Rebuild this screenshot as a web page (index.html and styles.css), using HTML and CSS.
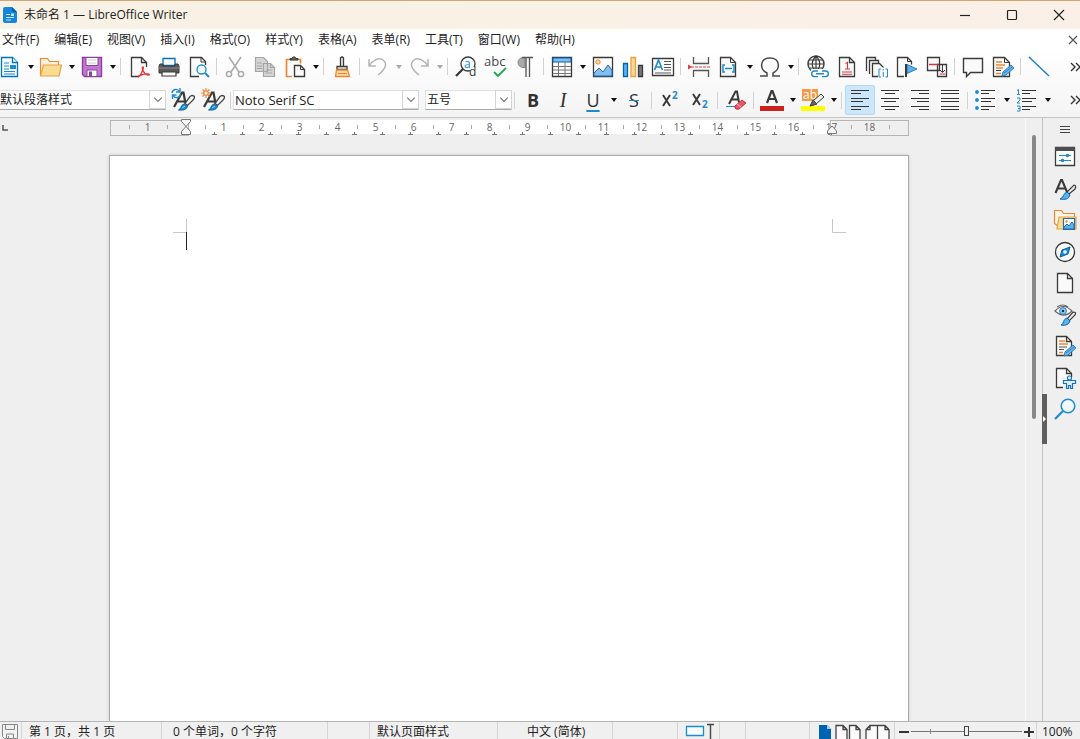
FILE: index.html
```html
<!DOCTYPE html>
<html lang="zh-CN">
<head>
<meta charset="utf-8">
<title>未命名 1 — LibreOffice Writer</title>
<link rel="stylesheet" href="styles.css">
</head>
<body>
<svg class="defs" aria-hidden="true">
  <symbol id="page" viewBox="0 0 24 24"><path d="M4.500 2.500h10l5 5v14h-15z" fill="#fafafa" stroke="#3a3a38" stroke-width="1.300"/><path d="M14.500 2.500v5h5" fill="none" stroke="#3a3a38" stroke-width="1.300"/></symbol>
  <symbol id="chev" viewBox="0 0 16 18"><path d="M4.500 7l4 4 4-4" fill="none" stroke="#777" stroke-width="1.200"/></symbol>
  <symbol id="brushA" viewBox="0 0 24 24"><path d="M3 19L11 4.500h1.500l2 11M6.500 13.500h7" fill="none" stroke="#3a3a38" stroke-width="2.200"/><path d="M21 7.500c3 0 3 2 1.500 4l-6 6-2.500-2 5-7z" fill="#fafafa" stroke="#444" stroke-width="1.300"/><path d="M13 16l3.500 2.500c-1 3-4 4-9 3.500 3-1 2-5 5.500-6z" fill="#1e8bcd" stroke="#0063b1"/><path d="M11 20l3-2" stroke="#9dd2f5"/></symbol>
  <symbol id="pen" viewBox="0 0 24 24"><path d="M12 22l1-4 8-7 3 3-8 7z" fill="#6bb5eb" stroke="#2a7fc4"/><path d="M14 19l8-6" stroke="#2a7fc4"/></symbol>
</svg>

<header class="titlebar">
  <svg class="app" viewBox="0 0 16 18"><path d="M3 1h7l5 5v9q0 2-2 2H3q-2 0-2-2V3q0-2 2-2z" fill="#1685d8"/><path d="M10 1v3q0 2 2 2h3z" fill="#0a5ea8"/><path d="M4 8.500h4M4 11.500h8M4 14h5" stroke="#bfe4ff" stroke-width="1.200"/><rect x="9" y="7.500" width="3" height="2.500" fill="#bfe4ff"/></svg>
  <h1 class="title">未命名 1 — LibreOffice Writer</h1>
  <button class="win" aria-label="最小化"><svg viewBox="0 0 12 12"><path d="M1 6.500h10"/></svg></button>
  <button class="win" aria-label="最大化"><svg viewBox="0 0 12 12"><rect x="1.500" y="1.500" width="9" height="9" rx="1"/></svg></button>
  <button class="win" aria-label="关闭"><svg viewBox="0 0 12 12"><path d="M1 1l10 10M11 1L1 11"/></svg></button>
</header>

<nav class="menubar">
  <button>文件(F)</button><button>编辑(E)</button><button>视图(V)</button><button>插入(I)</button><button>格式(O)</button><button>样式(Y)</button><button>表格(A)</button><button>表单(R)</button><button>工具(T)</button><button>窗口(W)</button><button>帮助(H)</button>
  <button class="docclose" aria-label="关闭文档"><svg viewBox="0 0 10 10"><path d="M1 1l8 8M9 1L1 9"/></svg></button>
</nav>

<div class="tools">
<div class="toolbar" role="toolbar" aria-label="标准">
  <button class="tb" aria-label="新建"><svg viewBox="0 0 24 24"><path d="M3.500 2.500h11l5 5v14h-16z" fill="#f4fbff" stroke="#0075be" stroke-width="1.300"/><path d="M14.500 2.500v5h5" fill="#fff" stroke="#0075be" stroke-width="1.300"/><path d="M6 8h5M6 11h5M6 14h5M6 16.500h11M6 19h11" stroke="#1e8bcd"/><rect x="12" y="10" width="6" height="4" fill="#1e8bcd"/></svg></button><button class="dd" aria-label="新建选项"></button>
  <button class="tb" aria-label="打开"><svg viewBox="0 0 24 24"><path d="M1.500 20.500v-17h7l2 3h9v4" fill="#fdf1de" stroke="#ed8733" stroke-width="1.200"/><path d="M1.500 21l3-11h18l-2.500 11z" fill="#f9dc8f" stroke="#e5a347" stroke-width="1.200"/></svg></button><button class="dd" aria-label="打开选项"></button>
  <button class="tb" aria-label="保存"><svg viewBox="0 0 24 24"><path d="M2.500 2.500h19v19h-17l-2-2z" fill="#c079cf" stroke="#8c3fa0" stroke-width="1.400"/><path d="M6 2.500h12v8H6z" fill="#fff" stroke="#8c3fa0"/><path d="M8 5h8M8 8h8" stroke="#ccc"/><path d="M7 15h10v6.500H7z" fill="#fff" stroke="#8c3fa0"/><path d="M9 16.500h3v5H9z" fill="#8c3fa0"/></svg></button><button class="dd" aria-label="保存选项"></button>
  <span class="sep"></span>
  <button class="tb" aria-label="导出为 PDF"><svg viewBox="0 0 24 24"><path d="M12 21.500H4.500v-19h10l5 5V12" fill="#fafafa" stroke="#3a3a38" stroke-width="1.300"/><path d="M14.500 2.500v5h5" fill="none" stroke="#3a3a38" stroke-width="1.300"/><path d="M16 12c-2 0 1 8 5 8s-1-3-9 1c-2 1 0 2 2-2s3-7 2-7z" fill="none" stroke="#e33b3b" stroke-width="1.400"/></svg></button>
  <button class="tb" aria-label="打印"><svg viewBox="0 0 24 24"><path d="M6 3.500h12v7H6z" fill="#fff" stroke="#0075be" stroke-width="1.300"/><path d="M3 9h3v2h12V9h3l1 2v7H2v-7z" fill="#5b5b5b" stroke="#3a3a38"/><path d="M5 17h14v4H5z" fill="#fff" stroke="#3a3a38" stroke-width="1.200"/><path d="M2 13h20" stroke="#888"/></svg></button>
  <button class="tb" aria-label="打印预览"><svg viewBox="0 0 24 24"><path d="M12 21.500H3.500v-19h11l4 4V10" fill="#fafafa" stroke="#3a3a38" stroke-width="1.300"/><path d="M14 2.500v4.500h4.500" fill="none" stroke="#3a3a38"/><circle cx="14.500" cy="14.500" r="4.500" fill="#f3fbff" stroke="#1e8bcd" stroke-width="1.300"/><path d="M18 18l4 4" stroke="#1e8bcd" stroke-width="2"/></svg></button>
  <span class="sep"></span>
  <button class="tb" aria-label="剪切"><svg viewBox="0 0 24 24" fill="none" stroke="#aaa" stroke-width="1.500"><path d="M6 2l10 15M18 2L8 17"/><circle cx="6" cy="19" r="2.600"/><circle cx="18" cy="19" r="2.600"/></svg></button>
  <button class="tb" aria-label="复制"><svg viewBox="0 0 24 24" fill="#d5d5d5" stroke="#a5a5a5" stroke-width="1.200"><path d="M2.500 2.500h8l4 4v10h-12zM10.500 8.500h7l4 4v9h-11z"/><path d="M17.500 8.500v4h4M4 8h5M4 11h5M4 13.500h5M13 15h6M13 18h6" fill="none"/></svg></button>
  <button class="tb" aria-label="粘贴"><svg viewBox="0 0 24 24"><path d="M9 21.500H3.500V4.500h14v4" fill="#fff" stroke="#ed8733" stroke-width="1.700"/><path d="M7 5V3.500h2l1-1.500h2l1 1.500h2V5z" fill="#666" stroke="#3a3a38"/><path d="M11.500 10.500h6l4 4v7h-10z" fill="#fafafa" stroke="#3a3a38" stroke-width="1.400"/><path d="M17.500 10.500v4h4" fill="none" stroke="#3a3a38"/></svg></button><button class="dd" aria-label="粘贴选项"></button>
  <span class="sep"></span>
  <button class="tb" aria-label="克隆格式"><svg viewBox="0 0 24 24"><path d="M10.500 11V3q1.500-2 3 0v8M7 11.500h10v3H7z" fill="#eee" stroke="#3a3a38" stroke-width="1.300"/><path d="M6.500 15h11l2 6.500h-14z" fill="#fbd9a5" stroke="#ed8733" stroke-width="1.300"/><path d="M8 18.500h9" stroke="#ed8733"/></svg></button>
  <span class="sep"></span>
  <button class="tb" aria-label="撤消"><svg viewBox="0 0 24 24" fill="none" stroke="#b5b5b5" stroke-width="1.500"><path d="M3 4v7h7M3 11C7 5 13 2 17 5s4 8-5 15"/></svg></button><button class="dd dim" aria-label="撤消选项"></button>
  <button class="tb" aria-label="恢复"><svg viewBox="0 0 24 24" fill="none" stroke="#b5b5b5" stroke-width="1.500"><path d="M21 4v7h-7M21 11C17 5 11 2 7 5s-4 8 5 15"/></svg></button><button class="dd dim" aria-label="恢复选项"></button>
  <span class="sep"></span>
  <button class="tb" aria-label="查找与替换"><svg viewBox="0 0 24 24"><circle cx="14" cy="9" r="7" fill="#f7fcff" stroke="#3a3a38" stroke-width="1.300"/><path d="M9 14l-7 7" stroke="#3a3a38" stroke-width="2.300"/><text x="10" y="13" class="gl" font-size="12" fill="#1e8bcd">a</text><path d="M16 12h8v10h-8z" fill="#fafafa"/><text x="15" y="21" class="gl" font-size="12" fill="#3a3a38">d</text></svg></button>
  <button class="tb" aria-label="拼写检查"><svg viewBox="0 0 24 24"><text x="0" y="11" class="gl" font-size="13" fill="#4a4a48">abc</text><path d="M10 17l4 4 8-8" fill="none" stroke="#18ab50" stroke-width="1.800"/></svg></button>
  <button class="tb" aria-label="格式标记"><svg viewBox="0 0 24 24"><path d="M11 2.500H9a5 5 0 0 0 0 10h2z" fill="#aaa" stroke="#888"/><path d="M8 2.500h11M12 3v19M15.500 3v19" stroke="#555" stroke-width="1.300"/></svg></button>
  <span class="sep"></span>
  <button class="tb" aria-label="插入表格"><svg viewBox="0 0 24 24"><path d="M2.500 2.500h19v19h-19z" fill="#fff" stroke="#3a3a38" stroke-width="1.300"/><path d="M3 3h18v4H3z" fill="#83beec" stroke="#0063b1"/><path d="M3 11.500h18M3 15h18M3 18.500h18M8.500 7v14M15 7v14" stroke="#777"/></svg></button><button class="dd" aria-label="表格选项"></button>
  <button class="tb" aria-label="插入图像"><svg viewBox="0 0 24 24"><path d="M2.500 2.500h19v19h-19z" fill="#fff" stroke="#3a3a38" stroke-width="1.300"/><circle cx="7" cy="7" r="2.200" fill="#fbd9a5" stroke="#ed8733"/><path d="M3 21v-3l5-5 4 4 5-7 4 5v6z" fill="#83beec" stroke="#1e6fb8"/></svg></button>
  <button class="tb" aria-label="插入图表"><svg viewBox="0 0 24 24" stroke-width="1.300"><path d="M2.500 8.500h4v13h-4z" fill="#5cb3ec" stroke="#0063b1"/><path d="M10 2.500h4.500v19H10z" fill="#fbd98d" stroke="#e5a347"/><path d="M17.500 10.500h4v11h-4z" fill="#777" stroke="#3a3a38"/></svg></button>
  <button class="tb" aria-label="插入文本框"><svg viewBox="0 0 24 24"><path d="M1.500 3.500h21v17h-21z" fill="#fff" stroke="#3a3a38" stroke-width="1.300"/><path d="M3.500 15L7.500 5l4 10M5 12h5" fill="none" stroke="#1e8bcd" stroke-width="1.600"/><path d="M13 6.500h7M13 9.500h7M13 12.500h7M13 15h7M4 18h16" stroke="#555"/></svg></button>
  <span class="sep"></span>
  <button class="tb" aria-label="插入分页符"><svg viewBox="0 0 24 24"><path d="M6.500 2v6.500h15V2M6.500 22v-6.500h15V22" fill="#fafafa" stroke="#555" stroke-width="1.300"/><path d="M4 12h20" stroke="#e33b3b" stroke-width="1.200" stroke-dasharray="3 1"/><path d="M1 9.500l4 2.500-4 2.500z" fill="#e33b3b"/></svg></button>
  <button class="tb" aria-label="插入字段"><svg viewBox="0 0 24 24"><path d="M3.500 2.500h10l5 5v14h-15z" fill="#fafafa" stroke="#3a3a38" stroke-width="1.300"/><path d="M13.500 2.500v5h5" fill="none" stroke="#3a3a38"/><path d="M8 10H6v7h2M15 10h2v7h-2M8 13.500h7" fill="none" stroke="#1e8bcd" stroke-width="1.500"/></svg></button><button class="dd" aria-label="字段选项"></button>
  <button class="tb" aria-label="插入特殊字符"><svg viewBox="0 0 24 24" fill="none" stroke="#4a4a4a" stroke-width="1.500"><path d="M2 21h7v-3C1 14 2 3 12 3s11 11 3 15v3h7"/></svg></button><button class="dd" aria-label="特殊字符选项"></button>
  <span class="sep"></span>
  <button class="tb" aria-label="插入超链接"><svg viewBox="0 0 24 24" fill="none"><circle cx="11" cy="9" r="8" stroke="#3a3a38" stroke-width="1.400"/><path d="M3 9h16M4.500 5h13M4.500 13h13M11 1v16M11 1c-5 5-5 11 0 16M11 1c5 5 5 11 0 16" stroke="#3a3a38" stroke-width="1.200"/><path d="M6 14h19v9H6z" fill="#fafafa"/><path d="M13 16H9.500a2.800 2.800 0 0 0 0 5.600H13M17 16h3.500a2.800 2.800 0 0 1 0 5.600H17M11 18.800h8" stroke="#1e8bcd" stroke-width="1.400"/></svg></button>
  <button class="tb" aria-label="插入脚注"><svg viewBox="0 0 24 24"><use href="#page"/><path d="M10.500 8.500l2-1v6.500M10 14h5M7 17h10M7 19.200h10" fill="none" stroke="#d9363e" stroke-width="1.100"/></svg></button>
  <button class="tb" aria-label="插入尾注"><svg viewBox="0 0 24 24" fill="#fafafa" stroke="#3a3a38" stroke-width="1.300"><path d="M1.500 16V2.500h9v3M4.500 19V5.500h9v3M7.500 21.500v-13h7l4 4v9z"/><path d="M13 12.500h11v11H13z" stroke="none"/><path d="M16 14h-2v8h2M20.500 14h2v8h-2M18.300 14v1.500M18.300 17v5" fill="none" stroke="#1e8bcd" stroke-width="1"/></svg></button>
  <button class="tb" aria-label="插入书签"><svg viewBox="0 0 24 24"><path d="M9 21.500H2.500v-19h10l4 4v3" fill="#fafafa" stroke="#3a3a38" stroke-width="1.300"/><path d="M12.500 2.500v4h4" fill="none" stroke="#3a3a38"/><path d="M12 9.500l10 4.500-10 4.500z" fill="#5cb3ec" stroke="#2a7fc4"/><path d="M11 9v13" stroke="#3a3a38" stroke-width="2"/></svg></button>
  <button class="tb" aria-label="插入交叉引用"><svg viewBox="0 0 24 24"><path d="M2.500 2.500h12v13h-12zM12.500 9.500h9v12h-9z" fill="#fafafa" stroke="#3a3a38" stroke-width="1.300"/><path d="M4 9.500h9" stroke="#d9363e" stroke-width="1.500"/><path d="M14 9.500h3.500V17M15 15l2.500 2.500L20 15" fill="none" stroke="#3a3a38"/><path d="M14.500 19h6" stroke="#d9363e"/></svg></button>
  <span class="sep"></span>
  <button class="tb" aria-label="插入批注"><svg viewBox="0 0 24 24"><path d="M2.500 3.500h19v14h-12l-4 4v-4h-3z" fill="#fafafa" stroke="#3a3a38" stroke-width="1.400"/></svg></button>
  <button class="tb" aria-label="修订"><svg viewBox="0 0 24 24"><path d="M2.500 2.500h11l5 5v14h-16z" fill="#fafafa" stroke="#3a3a38" stroke-width="1.300"/><path d="M13.500 2.500v5h5M5 15.500h5" fill="none" stroke="#3a3a38"/><path d="M5 7h6M5 10h9M5 13h7M5 18.500h5" stroke="#ed8733" stroke-width="1.300"/><use href="#pen" x="-1" y="-1"/></svg></button>
  <span class="sep"></span>
  <button class="tb" aria-label="插入线条"><svg viewBox="0 0 24 24"><path d="M2 2l20 19" stroke="#1e7fc4" stroke-width="1.400"/></svg></button>
  <button class="more" aria-label="更多工具"><svg viewBox="0 0 12 12"><path d="M2 2l4 4-4 4M7 2l4 4-4 4"/></svg></button>
</div>

<div class="toolbar format" role="toolbar" aria-label="格式">
  <label class="combo wide"><select aria-label="段落样式"><option>默认段落样式</option></select><svg class="chev"><use href="#chev"/></svg></label>
  <button class="tb" aria-label="更新样式"><svg viewBox="0 0 24 24"><use href="#brushA"/><path d="M1 5a4 4 0 0 1 7.500-1.500M9 0v4H5M9.500 6a4 4 0 0 1-7.500 1.500M1.500 11V7h4" fill="none" stroke="#1e8bcd" stroke-width="1.400"/></svg></button>
  <button class="tb" aria-label="新建样式"><svg viewBox="0 0 24 24"><use href="#brushA"/><path d="M5 0v10M0 5h10M1.500 1.500l7 7M8.500 1.500l-7 7" stroke="#ed8733" stroke-width="1.200"/><circle cx="5" cy="5" r="2.200" fill="#fff" stroke="#ed8733" stroke-width="1.200"/></svg></button>
  <span class="sep"></span>
  <label class="combo font"><select aria-label="字体名称"><option>Noto Serif SC</option></select><svg class="chev"><use href="#chev"/></svg></label>
  <label class="combo size"><select aria-label="字号"><option>五号</option></select><svg class="chev"><use href="#chev"/></svg></label>
  <span class="sep"></span>
  <button class="tb letter b" aria-label="粗体">B</button>
  <button class="tb letter i" aria-label="斜体">I</button>
  <button class="tb letter u" aria-label="下划线">U</button><button class="dd" aria-label="下划线选项"></button>
  <button class="tb letter s" aria-label="删除线">S</button>
  <span class="sep"></span>
  <button class="tb" aria-label="上标"><svg viewBox="0 0 24 24"><path d="M5 7l7 11M12 7L5 18" stroke="#3a3a38" stroke-width="2"/><text x="14" y="11" class="gb" font-size="10" fill="#1e8bcd">2</text></svg></button>
  <button class="tb" aria-label="下标"><svg viewBox="0 0 24 24"><path d="M5 6l7 11M12 6L5 17" stroke="#3a3a38" stroke-width="2"/><text x="14" y="20" class="gb" font-size="10" fill="#1e8bcd">2</text></svg></button>
  <span class="sep"></span>
  <button class="tb" aria-label="清除格式"><svg viewBox="0 0 24 24"><path d="M5 16L11.500 3.500H13l2 11M8 11.500h7" fill="none" stroke="#3a3a38" stroke-width="2"/><path d="M2 18.500h9" stroke="#1e8bcd"/><path d="M11 18l7-6 4 3-7 6q-2 1-4-1z" fill="#e9566b" stroke="#c9303e"/><path d="M13 16l4 3" stroke="#f8bcc3"/></svg></button>
  <span class="sep"></span>
  <button class="tb" aria-label="字体颜色"><svg viewBox="0 0 24 24"><path d="M7 15L11.500 3h1L17 15M8.500 11h7" fill="none" stroke="#3a3a38" stroke-width="2.200"/><path d="M0 18h24v5H0z" fill="#c9211e"/></svg></button><button class="dd" aria-label="字体颜色选项"></button>
  <button class="tb" aria-label="突出显示颜色"><svg viewBox="0 0 24 24"><path d="M1 1h16v12H1z" fill="#f39a47"/><text x="2" y="11" class="gr" font-size="12" fill="#fff">ab</text><path d="M0 18h24v5H0z" fill="#ff0"/><path d="M20 6l3 3-8 7-3-3z" fill="#eee" stroke="#3a3a38"/><path d="M12 12l4 4-3 1-4 1z" fill="#666" stroke="#3a3a38"/></svg></button><button class="dd" aria-label="突出显示颜色选项"></button>
  <span class="sep"></span>
  <button class="tb on" aria-label="左对齐" aria-pressed="true"><svg viewBox="0 0 24 24" class="lines"><path d="M3 2.500h18M3 5.500h10M3 10.500h18M3 13.500h12M3 18.500h18M3 21.500h10"/></svg></button>
  <button class="tb" aria-label="居中对齐"><svg viewBox="0 0 24 24" class="lines"><path d="M3 2.500h18M7 5.500h10M3 10.500h18M6 13.500h12M3 18.500h18M7 21.500h10"/></svg></button>
  <button class="tb" aria-label="右对齐"><svg viewBox="0 0 24 24" class="lines"><path d="M3 2.500h18M11 5.500h10M3 10.500h18M9 13.500h12M3 18.500h18M11 21.500h10"/></svg></button>
  <button class="tb" aria-label="两端对齐"><svg viewBox="0 0 24 24" class="lines"><path d="M3 2.500h18M3 5.500h18M3 10.500h18M3 13.500h18M3 18.500h18M3 21.500h18"/></svg></button>
  <span class="sep"></span>
  <button class="tb" aria-label="项目符号"><svg viewBox="0 0 24 24" class="lines"><path d="M7 2.500h14M7 5.500h8M7 10.500h14M7 13.500h10M7 18.500h14M7 21.500h8"/><g fill="#1e8bcd"><circle cx="3" cy="4" r="1.900"/><circle cx="3" cy="12" r="1.900"/><circle cx="3" cy="20" r="1.900"/></g></svg></button><button class="dd" aria-label="项目符号选项"></button>
  <button class="tb" aria-label="编号"><svg viewBox="0 0 24 24" class="lines"><path d="M7 2.500h14M7 5.500h8M7 10.500h14M7 13.500h10M7 18.500h14M7 21.500h8"/><path class="nums" d="M2 2.500l1.500-1v5M2 6.500h3M2 10h3v2l-3 3h3M2 18h3v5H2M3 20.500h2"/></svg></button><button class="dd" aria-label="编号选项"></button>
  <button class="more" aria-label="更多格式"><svg viewBox="0 0 12 12"><path d="M2 2l4 4-4 4M7 2l4 4-4 4"/></svg></button>
</div>
</div>

<div class="work">
  <main class="canvas">
    <svg class="tabtype" viewBox="0 0 6 6"><path d="M1 0v5h5" fill="none" stroke="#555" stroke-width="1.500"/></svg>
    <div class="ruler">
      <svg class="stops"><defs><pattern id="st" width="28" height="3" patternUnits="userSpaceOnUse"><path d="M0 2.500h5M2.500 0v3" stroke="#777"/></pattern></defs><rect width="100%" height="3" fill="url(#st)"/></svg>
      <div class="scale"><span>1</span><span></span><span>1</span><span>2</span><span>3</span><span>4</span><span>5</span><span>6</span><span>7</span><span>8</span><span>9</span><span>10</span><span>11</span><span>12</span><span>13</span><span>14</span><span>15</span><span>16</span><span>17</span><span>18</span><span></span></div>
      <svg class="mark left" viewBox="0 0 10 16"><path d="M.5.500h9v2l-4.500 5 4.500 5v3h-9v-3l4.500-5-4.500-5z" fill="#f6f6f6" stroke="#777"/></svg>
      <svg class="mark right" viewBox="0 0 10 16"><path d="M5 7l4.500 5v2.500h-9V12z" fill="#f6f6f6" stroke="#777"/></svg>
    </div>
    <article class="sheet" contenteditable="true" aria-label="文档正文">
      <svg class="corner" viewBox="0 0 14 32"><path d="M0 13.500h13M13.500 0v14" stroke="#c8c8c8"/><path d="M13.500 13v18" stroke="#222"/></svg>
      <svg class="corner end" viewBox="0 0 14 32"><path d="M.5 0v13.500H14" stroke="#c8c8c8" fill="none"/></svg>
    </article>
  </main>
  <div class="vscroll"><span class="thumb"></span></div>
  <aside class="sidebar">
    <button class="grip" aria-label="隐藏侧栏"><svg viewBox="0 0 5 50"><path d="M1 22l3 3-3 3z" fill="#fff"/></svg></button>
    <button class="sb menu" aria-label="侧栏设置"><svg viewBox="0 0 24 24"><path d="M7 8.500h10M7 11.500h10M7 14.500h10" stroke="#444"/></svg></button>
    <div class="deck">
      <button class="sb" aria-label="属性"><svg viewBox="0 0 24 24"><path d="M2.500 2.500h19v18h-19z" fill="#fff" stroke="#3a3a38" stroke-width="1.300"/><path d="M2 2h20v4H2z" fill="#4d4d4d"/><path d="M6 10.500h12M6 15.500h12" stroke="#1e8bcd" stroke-width="1.200"/><circle cx="14.500" cy="10.500" r="1.800" fill="#1e8bcd"/><circle cx="9.500" cy="15.500" r="1.800" fill="#1e8bcd"/></svg></button>
      <button class="sb" aria-label="样式"><svg viewBox="0 0 24 24"><path d="M2.500 16L8 3h1l5 12M5 11.500h7" fill="none" stroke="#3a3a38" stroke-width="2.100"/><path d="M21 8c2 0 2 2 1 4l-6 5-2-2z" fill="#eee" stroke="#3a3a38" stroke-width="1.200"/><path d="M14 15l3 3c-1 4-5 5-10 4 4-1 3-6 7-7z" fill="#5cb3ec" stroke="#0063b1"/></svg></button>
      <button class="sb" aria-label="图库"><svg viewBox="0 0 24 24"><path d="M5.500 18.500l-4-3v-13h7l2 3h11v4" fill="#fff4e6" stroke="#ed8733" stroke-width="1.200"/><path d="M4 21l2-12h17v12z" fill="#f9dc8f" stroke="#e5a347" stroke-width="1.200"/><path d="M10.500 10.500h11v11h-11z" fill="#fff" stroke="#1e6fb8" stroke-width="1.200"/><circle cx="13.500" cy="13.500" r="1.200" fill="#ed8733"/><path d="M11 21v-2l3-3 2 2 3-4 2 3v4z" fill="#5cb3ec" stroke="#1e6fb8"/></svg></button>
      <button class="sb" aria-label="导航"><svg viewBox="0 0 24 24"><circle cx="12" cy="12" r="9.500" fill="#fafafa" stroke="#3a3a38" stroke-width="1.300"/><path d="M17 7l-2 7-8 3 2-7z" fill="#1e8bcd" stroke="#0063b1"/><circle cx="12" cy="12" r="1.800" fill="#fff"/></svg></button>
      <button class="sb" aria-label="页面"><svg viewBox="0 0 24 24"><use href="#page"/></svg></button>
      <button class="sb" aria-label="样式检查器"><svg viewBox="0 0 24 24"><path d="M2 8q8-9 17 0-8 8-17 0zM4 4q6-4 11 0" fill="#fafafa" stroke="#666" stroke-width="1.200"/><circle cx="10" cy="8" r="3.400" fill="#8accf5" stroke="#2a7fc4"/><circle cx="10" cy="8" r="1.200" fill="#222"/><path d="M20 9c3 0 3 1 2 3l-6 6-2-2z" fill="#eee" stroke="#3a3a38" stroke-width="1.200"/><path d="M14 15l3 3c-1 3-4 5-9 4 3-1 2-6 6-7z" fill="#5cb3ec" stroke="#0063b1"/></svg></button>
      <button class="sb" aria-label="管理更改"><svg viewBox="0 0 24 24"><use href="#page" x="-1"/><path d="M6 7h6M6 10h9M6 18.500h4" stroke="#ed8733" stroke-width="1.300"/><path d="M6 13h8M6 15.500h5" stroke="#555"/><use href="#pen" x="-1"/></svg></button>
      <button class="sb" aria-label="无障碍检查"><svg viewBox="0 0 24 24"><use href="#page" x="-1"/><path d="M10 11h13v12H10z" fill="#efefef"/><circle cx="16.500" cy="12" r="2" fill="#fff" stroke="#1e6fb8" stroke-width="1.200"/><path d="M10.500 14.500h12v3h-3v5h-2v-3h-2v3h-2v-5h-3z" fill="#d7eeff" stroke="#1e6fb8" stroke-width="1.200"/></svg></button>
      <button class="sb" aria-label="查找"><svg viewBox="0 0 24 24"><circle cx="15" cy="9" r="6.800" fill="#f1f9ff" stroke="#1e8bcd" stroke-width="1.500"/><path d="M10 14l-8 8" stroke="#1e8bcd" stroke-width="2.300"/></svg></button>
    </div>
  </aside>
</div>

<footer class="status">
  <span class="cell pic"><svg viewBox="0 0 18 18" fill="#f3f3f3" stroke="#888"><path d="M1.500 2.500h15v14h-13l-2-2zM4.500 2.500v5h9v-5M5.500 16v-4h7v4M7.500 16v-2"/></svg></span>
  <span class="cell">第 1 页，共 1 页</span>
  <span class="cell count">0 个单词，0 个字符</span>
  <span class="cell"></span>
  <span class="cell">默认页面样式</span>
  <span class="cell lang">中文 (简体)</span>
  <span class="cell"></span>
  <span class="cell"><svg class="mode" viewBox="0 0 30 18"><path d="M1.500 4.500h17v9h-17z" fill="#f7fcff" stroke="#1e8bcd" stroke-width="1.300"/><path d="M22 2.500h7M25.500 2v15" stroke="#444" stroke-width="1.400"/></svg></span>
  <span class="cell"></span>
  <span class="cell"></span>
  <span class="cell views">
    <button aria-label="单页视图"><svg viewBox="0 0 12 18"><path d="M0 2h8l4 4v12H0z" fill="#0063b1"/><path d="M8 2v4h4z" fill="#9dd2f5"/></svg></button>
    <button aria-label="多页视图"><svg class="two" viewBox="0 0 26 18" fill="#fafafa" stroke="#444" stroke-width="1.300"><path d="M1 19V2.500h7l4 4V19M8 2.500v4h4M14.500 19V2.500h6.500l4 4V19M21 2.500v4h4"/></svg></button>
    <button aria-label="书本视图"><svg class="two" viewBox="0 0 26 18" fill="#fafafa" stroke="#444" stroke-width="1.300"><path d="M1 19V6.500l4-4h7.500V19M5 2.500v4H1M12.500 19V2.500H20l4 4V19M20 2.500v4h4"/></svg></button>
  </span>
  <span class="cell zoom">
    <button aria-label="缩小"><svg viewBox="0 0 10 18"><path d="M0 9h10" stroke="#333" stroke-width="2"/></svg></button>
    <input type="range" min="0" max="100" value="50" aria-label="缩放">
    <button aria-label="放大"><svg viewBox="0 0 10 18"><path d="M0 9h10M5 4v10" stroke="#333" stroke-width="2"/></svg></button>
  </span>
  <span class="cell pct">100%</span>
</footer>
</body>
</html>
```
FILE: styles.css
```css
* { box-sizing: border-box; }
html, body { height: 100%; margin: 0; }
body {
  display: flex;
  flex-direction: column;
  overflow: hidden;
  background: #efefef;
  color: #222;
  font: 12px/18px "Open Sans", "Noto Sans CJK SC", sans-serif;
}
button {
  margin: 0;
  padding: 0;
  border: 0;
  background: none;
  color: inherit;
  font: inherit;
  flex: none;
}
svg { display: block; flex: none; }
.defs { position: absolute; width: 0; height: 0; }
.gl, .gr, .gb { font-family: "Open Sans", sans-serif; }
.gl { font-weight: 500; }
.gb { font-weight: 700; }

.titlebar {
  display: flex;
  align-items: center;
  flex: none;
  height: 29px;
  margin-right: -2px;
  padding-left: 2px;
  border-top: 1px solid #cfa66e;
  background: linear-gradient(90deg, #f8f1e5, #fbf0e8);
}
.app { width: 16px; height: 18px; margin-right: 6px; }
.title { flex: 1; margin: 0; font-size: 12px; font-weight: 400; }
.win { width: 47px; height: 28px; display: grid; place-items: center; }
.win svg { width: 12px; height: 12px; fill: none; stroke: #222; stroke-width: 1.2; }

.menubar {
  display: flex;
  align-items: center;
  gap: 15px;
  flex: none;
  height: 21px;
  padding: 0 2px;
  background: #fff;
}
.docclose { margin-left: auto; }
.docclose svg { width: 10px; height: 10px; fill: none; stroke: #555; stroke-width: 1.2; }

.tools { flex: none; border-bottom: 1px solid #c4c4c4; background: linear-gradient(#fff, #f4f4f4); }
.toolbar { display: flex; align-items: center; height: 33px; margin-left: -5px; }
.format { height: 34px; margin-left: -8px; }
.tb { width: 30px; height: 30px; display: grid; place-items: center; }
.tb svg, .sb svg { width: 24px; height: 24px; overflow: visible; }
.on { background: #cce6fb; border: 1px solid #b3d8f5; border-radius: 2px; }
.dd { width: 11px; height: 30px; display: grid; place-items: center; }
.dd::before { content: ""; margin-left: 1px; border: 3px solid transparent; border-top: 4px solid #111; border-bottom: 0; }
.dim::before { border-top-color: #aaa; }
.sep { flex: none; width: 1px; height: 17px; margin: 0 3px 0 2px; background: #d2d2d2; }
.more { margin-left: auto; margin-right: -1px; }
.more svg { width: 12px; height: 12px; fill: none; stroke: #333; stroke-width: 1.4; }
.lines { stroke: #333; stroke-width: 1.2; }
.lines g { stroke: none; }
.nums { fill: none; stroke: #1e8bcd; stroke-width: 1; }

.combo { position: relative; flex: none; height: 20px; }
.combo select {
  appearance: none;
  width: 100%;
  height: 20px;
  margin: 0;
  padding: 0 20px 0 1px;
  border: 1px solid #e2e2e2;
  border-bottom-color: #aaa;
  border-radius: 0;
  background: #fff;
  color: #222;
  font: inherit;
}
.combo .chev { position: absolute; right: 0; top: 0; width: 17px; height: 19px; border: 1px solid #d5d5d5; pointer-events: none; }
.wide { width: 174px; margin-right: 2px; }
.wide select { padding-left: 7px; }
.font { width: 186px; margin-left: -1px; margin-right: 6px; }
.font select { font-size: 13px; }
.size { width: 87px; }
.letter { font-size: 18px; color: #333; }
.b { font-weight: 700; }
.i { font-family: "Liberation Serif", serif; font-style: italic; font-size: 20px; }
.u { text-decoration: underline #1e8bcd 2px; text-underline-offset: 3px; }
.s { text-decoration: line-through #1e8bcd 1px; }

.work { flex: 1; display: flex; min-height: 0; }
.canvas { position: relative; flex: 1; display: flex; flex-direction: column; padding: 2px 7px 0 0; overflow: hidden; }
.tabtype { position: absolute; left: 2px; top: 7px; width: 6px; height: 6px; }
.ruler {
  position: relative;
  flex: none;
  width: 78%;
  min-width: 799px;
  height: 14px;
  margin: 0 auto;
  background: linear-gradient(90deg, #efefef 76px, #fff 76px, #fff 722px, #efefef 722px);
}
.ruler::before, .ruler::after { content: ""; position: absolute; top: 0; height: 14px; border: 1px solid #b5b5b5; width: 77px; }
.ruler::before { left: 0; }
.ruler::after { right: 0; }
.scale { display: flex; padding-left: 19px; overflow: hidden; height: 14px; }
.scale span {
  flex: none;
  width: 38px;
  text-align: center;
  color: #666;
  font-size: 10px;
  line-height: 14px;
  background: linear-gradient(#aaa, #aaa) 0 5px / 1px 4px no-repeat;
}
.stops { position: absolute; left: 102px; top: 12px; width: 620px; height: 3px; }
.mark { position: absolute; top: -1px; width: 10px; height: 16px; z-index: 1; }
.left { left: 71px; }
.right { right: 72px; }
.sheet {
  position: relative;
  flex: 1;
  width: 78%;
  min-width: 800px;
  margin: 21px auto 0;
  display: flex;
  justify-content: space-between;
  padding: 63px 62px 0 63px;
  border: 1px solid #aaa;
  border-bottom: 0;
  background: #fff;
  box-shadow: 0 0 3px #c8c8c8;
}
.corner { width: 14px; height: 32px; }
.vscroll { flex: none; width: 17px; border-left: 1px solid #f8f8f8; padding: 17px 6px 0; }
.thumb { display: block; width: 4px; height: 284px; border-radius: 2px; background: #888; }
.sidebar { position: relative; flex: none; width: 38px; padding-left: 7px; border-left: 1px solid #c4c4c4; }
.grip { position: absolute; left: -1px; top: 276px; width: 5px; height: 50px; background: #5e5e5e; }
.sb { display: grid; place-items: center; width: 30px; height: 30px; }
.menu { height: 24px; }
.deck { display: flex; flex-direction: column; justify-content: space-between; height: 282px; }

.status {
  flex: none;
  display: grid;
  grid-template-columns: 22px 140px 166px 42px 128px 115px 65px 42px 26px 1fr 85px 142px 43px;
  height: 18px;
  overflow: hidden;
  border-top: 1px solid #b5b5b5;
  background: #f0f0f0;
  line-height: 20px;
}
.cell { display: flex; padding-left: 7px; border-right: 1px solid #d5d5d5; white-space: nowrap; }
.cell svg { height: 18px; }
.pic { padding-left: 1px; }
.pic svg { width: 18px; }
.count { padding-left: 11px; }
.lang { padding-left: 29px; }
.mode { width: 30px; }
.views { gap: 4px; padding-left: 9px; }
.views svg { width: 12px; }
.views .two { width: 26px; }
.zoom { gap: 2px; padding-left: 4px; padding-right: 2px; }
.zoom svg { width: 10px; }
.zoom input {
  appearance: none;
  flex: 1;
  min-width: 0;
  height: 18px;
  margin: 0;
  background: linear-gradient(#888, #888) 19px 7px / 1px 5px no-repeat, linear-gradient(#777, #777) 0 9px / 100% 1px no-repeat;
}
.zoom input::-webkit-slider-thumb { appearance: none; width: 5px; height: 10px; border: 1px solid #444; background: #f0f0f0; }
.pct { padding-left: 5px; border: 0; }
```
